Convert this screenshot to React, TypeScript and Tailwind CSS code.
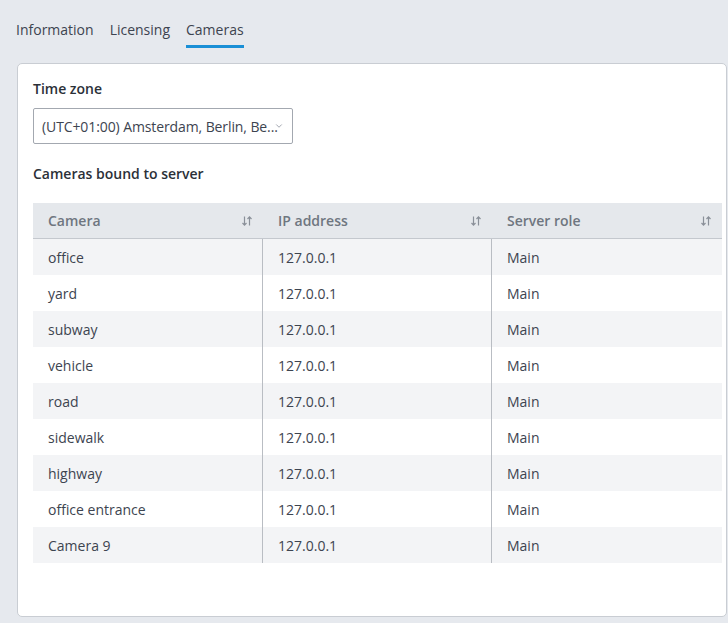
import { ChevronDown } from "lucide-react";

const cameras = [
  "office",
  "yard",
  "subway",
  "vehicle",
  "road",
  "sidewalk",
  "highway",
  "office entrance",
  "Camera 9",
];

function SortIcon() {
  return (
    <svg width="12" height="12" viewBox="0 0 12 12" fill="none" stroke="#8a9099" strokeWidth="1.2">
      <path d="M3.5 1.5v8.5M1.5 8l2 2.2 2-2.2" />
      <path d="M8.5 10.5V2M6.5 4l2-2.2 2 2.2" />
    </svg>
  );
}

function App() {
  const headers = ["Camera", "IP address", "Server role"];

  return (
    <div
      className="w-[728px] h-[623px] bg-[#e6e9ee] text-[#3d4450] text-[14px] overflow-hidden"
      style={{ fontFamily: '"Open Sans", "Noto Sans", sans-serif' }}
    >
      {/* Tabs */}
      <div className="flex items-end gap-4 pl-4 pt-[20px] h-[48px]">
        <div className="pb-[8px]">Information</div>
        <div className="pb-[8px]">Licensing</div>
        <div className="pb-[5px] border-b-[3px] border-[#1a8fd6] leading-[21px]">Cameras</div>
      </div>

      {/* Card */}
      <div className="ml-[17px] mt-[15px] w-[710px] h-[554px] bg-white border border-[#c9cdd3] rounded-[5px] pl-[15px] pr-[5px] pt-[15px]">
        <div className="font-semibold text-[#2b3038] leading-[20px]">Time zone</div>
        <div className="mt-[9px] w-[260px] h-[36px] border border-[#a3a8b0] rounded-[2px] flex items-center pl-[8px] pr-[2px]">
          <span className="whitespace-nowrap shrink-0 tracking-[-0.1px]">(UTC+01:00) Amsterdam, Berlin, Be...</span>
          <ChevronDown size={10} strokeWidth={1.5} className="shrink-0 -ml-[4px] text-[#6b7280]" />
        </div>

        <div className="mt-[20px] font-semibold text-[#2b3038] leading-[20px]">Cameras bound to server</div>

        <div className="mt-[19px] w-[689px]">
          <div className="grid grid-cols-[230px_229px_230px] h-[36px] bg-[#e5e8ec] border-b border-[#c4c8ce]">
            {headers.map((h) => (
              <div key={h} className="flex items-center justify-between pl-[15px] pr-[10px] font-semibold text-[#6f7680]">
                <span>{h}</span>
                <SortIcon />
              </div>
            ))}
          </div>
          {cameras.map((name, i) => (
            <div
              key={name}
              className={`grid grid-cols-[230px_229px_230px] h-[36px] ${i % 2 === 0 ? "bg-[#f3f4f6]" : "bg-white"}`}
            >
              <div className="flex items-center pl-[15px] border-r border-[#b9bdc3]">{name}</div>
              <div className="flex items-center pl-[15px] border-r border-[#b9bdc3]">127.0.0.1</div>
              <div className="flex items-center pl-[15px]">Main</div>
            </div>
          ))}
        </div>
      </div>
    </div>
  );
}

export default App;
